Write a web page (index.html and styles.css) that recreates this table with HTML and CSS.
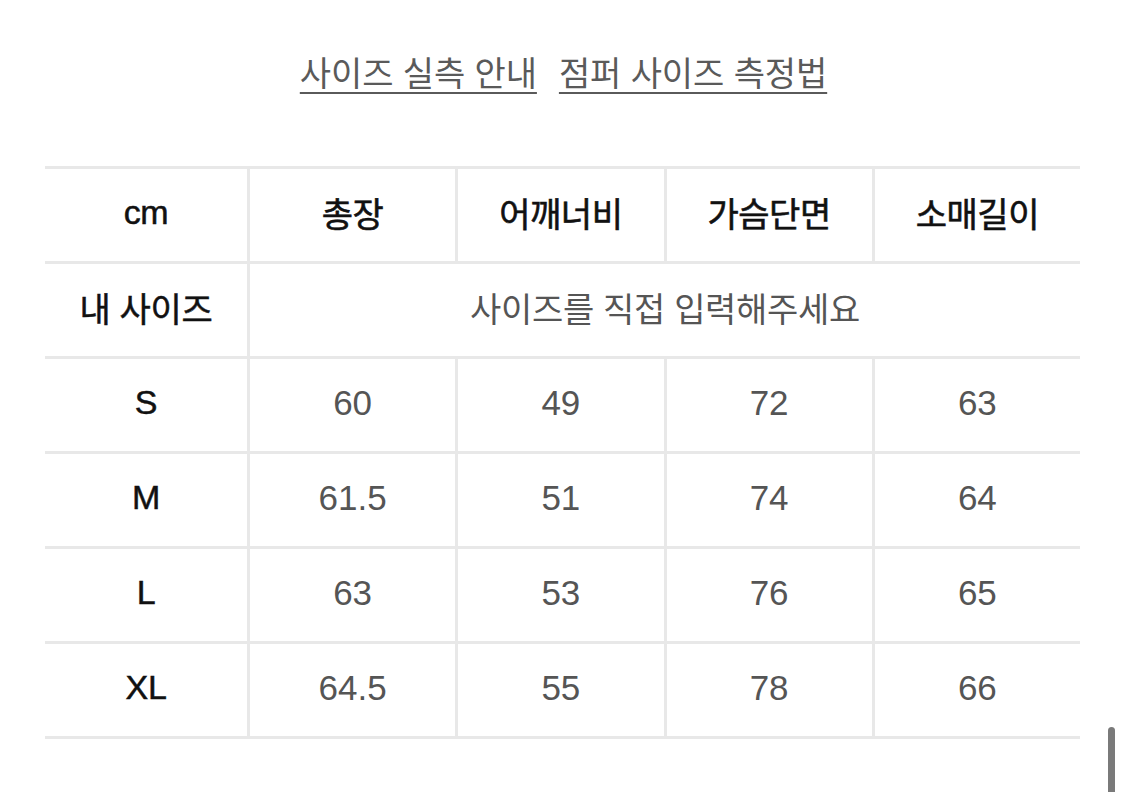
FILE: index.html
```html
<!DOCTYPE html>
<html lang="ko">
<head>
<meta charset="utf-8">
<link rel="stylesheet" href="styles.css">
</head>
<body>
<div class="page">
  <nav class="links">
    <a class="link" href="#">사이즈 실측 안내</a>
    <a class="link" href="#">점퍼 사이즈 측정법</a>
  </nav>
  <div class="table">
    <div class="cell label">cm</div>
    <div class="cell head">총장</div>
    <div class="cell head">어깨너비</div>
    <div class="cell head">가슴단면</div>
    <div class="cell head">소매길이</div>

    <div class="cell label">내 사이즈</div>
    <div class="cell value span4">사이즈를 직접 입력해주세요</div>

    <div class="cell label">S</div>
    <div class="cell value">60</div>
    <div class="cell value">49</div>
    <div class="cell value">72</div>
    <div class="cell value">63</div>

    <div class="cell label">M</div>
    <div class="cell value">61.5</div>
    <div class="cell value">51</div>
    <div class="cell value">74</div>
    <div class="cell value">64</div>

    <div class="cell label">L</div>
    <div class="cell value">63</div>
    <div class="cell value">53</div>
    <div class="cell value">76</div>
    <div class="cell value">65</div>

    <div class="cell label">XL</div>
    <div class="cell value">64.5</div>
    <div class="cell value">55</div>
    <div class="cell value">78</div>
    <div class="cell value">66</div>
  </div>
</div>
<div class="scrollbar"></div>
</body>
</html>
```
FILE: styles.css
```css
html, body {
  margin: 0;
  padding: 0;
  background: #ffffff;
}
body {
  font-family: "Liberation Sans", "Noto Sans CJK KR", sans-serif;
  width: 1125px;
  height: 792px;
  overflow: hidden;
  position: relative;
}
.page {
  padding: 50px 45px 0 45px;
}
.links {
  display: flex;
  justify-content: center;
  gap: 22px;
  height: 44px;
  line-height: 44px;
  padding-left: 2px;
}
.link {
  font-family: "Noto Sans CJK KR", sans-serif;
  font-size: 34px;
  color: #5a5a5a;
  text-decoration: underline;
  text-decoration-thickness: 2px;
  text-underline-offset: 6px;
  letter-spacing: -0.1px;
}
.table {
  margin-top: 72px;
  display: grid;
  grid-template-columns: 202px repeat(4, 1fr);
  grid-auto-rows: 92px;
  gap: 3px;
  background: #e8e8e8;
  border-top: 3px solid #e8e8e8;
  border-bottom: 3px solid #e8e8e8;
  width: 1035px;
}
.cell {
  background: #ffffff;
  display: flex;
  align-items: center;
  justify-content: center;
  font-size: 34px;
  padding-bottom: 5px;
  box-sizing: border-box;
}
.head {
  color: #111111;
  font-weight: 400;
  letter-spacing: -0.5px;
  -webkit-text-stroke: 0.6px #111111;
}
.label {
  color: #111111;
  font-weight: 400;
  letter-spacing: -0.3px;
  -webkit-text-stroke: 0.5px #111111;
}
.value {
  color: #555555;
  font-size: 35px;
}
.span4 {
  grid-column: span 4;
  font-size: 34px;
  letter-spacing: -0.3px;
}
.scrollbar {
  position: absolute;
  left: 1108px;
  top: 727px;
  width: 7px;
  height: 80px;
  border-radius: 4px;
  background: #7a7a7a;
}
```
